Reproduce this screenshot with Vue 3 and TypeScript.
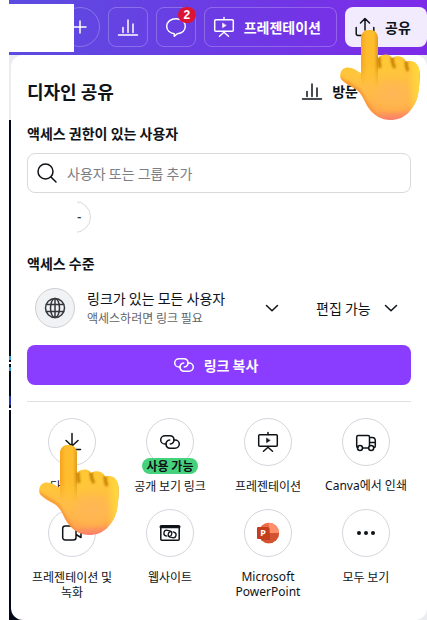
<script setup lang="ts">
import { ref } from 'vue'

interface ShareAction {
  id: string
  label: string
  badge?: string
  latin?: boolean
  pointed?: boolean
}

const actions: ShareAction[] = [
  { id: 'download', label: '다운로드', pointed: true },
  { id: 'link', label: '공개 보기 링크', badge: '사용 가능' },
  { id: 'present', label: '프레젠테이션' },
  { id: 'print', label: 'Canva에서 인쇄', latin: true },
  { id: 'record', label: '프레젠테이션 및 녹화' },
  { id: 'website', label: '웹사이트' },
  { id: 'powerpoint', label: 'Microsoft PowerPoint', latin: true },
  { id: 'more', label: '모두 보기' },
]

const people = ref('')
const permission = ref('edit')
</script>

<template>
  <div class="page">
    <!-- Shared drawings -->
    <svg class="defs" width="0" height="0" aria-hidden="true">
      <defs>
        <linearGradient id="skin" x1="0.5" y1="0" x2="0.55" y2="1">
          <stop offset="0" stop-color="#ffc52f" />
          <stop offset="0.4" stop-color="#ffc837" />
          <stop offset="0.7" stop-color="#ffba4a" />
          <stop offset="0.9" stop-color="#ffa550" />
          <stop offset="1" stop-color="#fb7f6b" />
        </linearGradient>
        <linearGradient id="finger" x1="0" y1="0" x2="1" y2="0">
          <stop offset="0" stop-color="#f7a420" />
          <stop offset="0.35" stop-color="#ffbd2e" />
          <stop offset="0.75" stop-color="#fdbd2c" />
          <stop offset="1" stop-color="#e29c1d" />
        </linearGradient>
        <linearGradient id="fingerFade" x1="0" y1="0" x2="0" y2="1">
          <stop offset="0" stop-color="#fff" />
          <stop offset="0.65" stop-color="#fff" />
          <stop offset="1" stop-color="#000" />
        </linearGradient>
        <mask id="fingerMask" maskUnits="userSpaceOnUse" x="0" y="0" width="80" height="60">
          <rect width="80" height="56" fill="url(#fingerFade)" />
        </mask>
        <linearGradient id="rightGlow" x1="0" y1="0" x2="1" y2="0">
          <stop offset="0.7" stop-color="#ffd93b" stop-opacity="0" />
          <stop offset="0.96" stop-color="#ffdb3c" stop-opacity="0.9" />
          <stop offset="1" stop-color="#e5b43a" />
        </linearGradient>
        <radialGradient id="palm">
          <stop offset="0" stop-color="#ffb657" />
          <stop offset="0.6" stop-color="#ffb94f" stop-opacity="0.7" />
          <stop offset="1" stop-color="#ffc037" stop-opacity="0" />
        </radialGradient>
        <filter id="soft" x="-50%" y="-50%" width="200%" height="200%">
          <feGaussianBlur stdDeviation="1.3" />
        </filter>
        <clipPath id="handClip">
          <path
            d="M21 9C21 3 24.500 0 29.500 0S38 3 38 9V28C40 25 43 24.500 46 24.500C49 24.500 51 26 52 28C54 26.500 57 26 60 26.500C63 27 65 29 66 31.500C70 30.500 74 31 76.500 34C79.500 37 80 42 79.500 50C79 62 78 72 70 81C64 88 57 90 50 90C42 90 34 86 28 77C24 71 23 65 17 60C12 57 4 53 1 49C-1 45 1 39 5 38C11 36 17 41 21 43Z"
          />
        </clipPath>
      </defs>
      <symbol id="hand" viewBox="0 0 80 90">
        <g clip-path="url(#handClip)">
          <rect width="80" height="90" fill="url(#skin)" />
          <ellipse cx="53" cy="64" rx="27" ry="20" fill="url(#palm)" />
          <rect x="38" y="24" width="42" height="66" fill="url(#rightGlow)" />
          <path d="M-2 47C6 53 14 56 19 61C24 68 27 79 36 86" fill="none" stroke="#f4872a" stroke-width="4" opacity="0.6" filter="url(#soft)" />
          <rect x="21" y="0" width="17" height="56" fill="url(#finger)" mask="url(#fingerMask)" />
          <g fill="none" stroke="#c47d05" stroke-width="3" filter="url(#soft)">
            <path d="M39 27C39 31 39 34 40 38" />
            <path d="M52 27C52 33 53 35 55 38" />
            <path d="M66 31C66 36 67 39 68 41" />
          </g>
        </g>
      </symbol>
      <symbol id="i-chart" viewBox="0 0 24 24">
        <path d="M2.500 20h19M7 17.500v-5M12 17.500V5M17 17.500V9" />
      </symbol>
      <symbol id="i-present" viewBox="0 0 24 24">
        <rect x="2.700" y="4.700" width="18.600" height="11.600" rx="1" />
        <path d="M12 4.500V2.500M12 16.500v1M7.500 21.300l4.500-4 4.500 4" />
        <path d="M10.500 8.300v4.400l3.500-2.200z" fill="currentColor" stroke-width="0.500" />
      </symbol>
      <symbol id="i-link" viewBox="0 0 24 24">
        <path d="M8.300 14H7A4.300 4.100 0 0 1 7 5.800H12A4.200 4.200 0 0 1 16 9.600C16.300 11.600 14.700 13.800 12.300 14" />
        <path d="M15.700 10H17A4.300 4.100 0 0 1 17 18.200H12A4.200 4.200 0 0 1 8 14.400C7.700 12.400 9.300 10.200 11.700 10" />
      </symbol>
      <symbol id="i-chevron" viewBox="0 0 24 24">
        <path d="M6.500 9.500l5.500 5.300 5.500-5.300" />
      </symbol>
    </svg>

    <header class="bar">
      <div class="cover"></div>
      <button class="tool add" type="button" aria-label="추가">
        <svg class="icon" viewBox="0 0 24 24"><path d="M6 12h12M12 6v12" /></svg>
      </button>
      <button class="tool square" type="button" aria-label="통계">
        <svg class="icon"><use href="#i-chart" /></svg>
      </button>
      <button class="tool square" type="button" aria-label="댓글">
        <svg class="icon" viewBox="0 0 24 24">
          <path d="M10.300 18.700C5.900 18.200 2.700 15.300 2.700 11.300C2.700 7 6.700 3.700 12 3.700S21.300 7 21.300 11.300C21.300 15.300 18 18.300 13.300 18.700L10.300 21.300Z" />
        </svg>
        <span class="count">2</span>
      </button>
      <button class="tool present" type="button">
        <svg class="icon"><use href="#i-present" /></svg>
        <span>프레젠테이션</span>
      </button>
      <button class="tool share" type="button">
        <svg class="icon" viewBox="0 0 24 24">
          <path d="M3.200 12.500V18.500C3.200 19.700 4 20.500 5.200 20.500H18.800C20 20.500 20.800 19.700 20.800 18.500V12.500M12 15V4M7.500 8L12 3.500L16.500 8" />
        </svg>
        <span>공유</span>
        <svg class="hand hand-share" aria-hidden="true"><use href="#hand" /></svg>
      </button>
    </header>

    <div class="backdrop">
      <main class="panel">
        <div class="title-row">
          <h1>디자인 공유</h1>
          <button class="visitors" type="button">
            <svg class="icon"><use href="#i-chart" /></svg>
            <span>방문</span>
          </button>
        </div>

        <label class="heading" for="people">액세스 권한이 있는 사용자</label>
        <div class="search">
          <svg class="icon" viewBox="0 0 24 24">
            <circle cx="10.500" cy="10.500" r="7.500" />
            <path d="M16 16l5 5" />
          </svg>
          <input id="people" v-model="people" type="text" placeholder="사용자 또는 그룹 추가" />
        </div>
        <div class="member"><span class="member-ring">-</span></div>

        <h2 class="heading">액세스 수준</h2>
        <div class="access">
          <button class="scope" type="button" aria-haspopup="listbox">
            <span class="globe">
              <svg class="icon" viewBox="0 0 24 24">
                <circle cx="12" cy="12" r="9.500" />
                <ellipse cx="12" cy="12" rx="4.500" ry="9.500" />
                <path d="M3.500 8.500h17M3.500 15.500h17M12 2.500v19" />
              </svg>
            </span>
            <span class="scope-text">
              <span class="scope-name">링크가 있는 모든 사용자</span>
              <span class="scope-note">액세스하려면 링크 필요</span>
            </span>
            <svg class="icon"><use href="#i-chevron" /></svg>
          </button>
          <div class="permission">
            <select v-model="permission" aria-label="권한">
              <option value="edit">편집 가능</option>
            </select>
            <svg class="icon"><use href="#i-chevron" /></svg>
          </div>
        </div>

        <button class="copy" type="button">
          <svg class="icon"><use href="#i-link" /></svg>
          <span>링크 복사</span>
        </button>

        <hr />

        <div class="actions">
          <button v-for="a in actions" :key="a.id" class="action" type="button">
            <span class="ring">
              <svg v-if="a.id === 'download'" class="icon" viewBox="0 0 24 24">
                <path d="M12 3.500V15.500M6 10.500l6 5.500 6-5.500M3.500 19.500h17" />
              </svg>
              <svg v-else-if="a.id === 'link'" class="icon"><use href="#i-link" /></svg>
              <svg v-else-if="a.id === 'present'" class="icon"><use href="#i-present" /></svg>
              <svg v-else-if="a.id === 'print'" class="icon" viewBox="0 0 24 24">
                <path d="M4 17.500C3 17.500 2.700 17 2.700 16V7C2.700 6 3.200 5.500 4.200 5.500H14C15 5.500 15.500 6 15.500 7V15.500M8.500 18H14.500M15.500 7.500H18.300C20.300 7.500 21.300 9 21.300 11V16C21.300 17 21 17.500 20 17.500M16 12.500H21" />
                <circle cx="6" cy="18" r="2.500" />
                <circle cx="17.200" cy="18" r="2.500" />
              </svg>
              <svg v-else-if="a.id === 'record'" class="icon" viewBox="0 0 24 24">
                <path d="M5.200 5H13.500C15 5 16 6 16 7.500V16.500C16 18 15 19 13.500 19H5.200C3.700 19 2.700 18 2.700 16.500V7.500C2.700 6 3.700 5 5.200 5ZM16 10.500L21 7.500V16.500L16 13.500" />
              </svg>
              <svg v-else-if="a.id === 'website'" class="icon" viewBox="0 0 24 24">
                <rect x="2.800" y="4.800" width="18.400" height="14.400" rx="1" />
                <path d="M3 5.700h18" stroke-width="3" />
                <g transform="rotate(12 12 13)" stroke-width="1.300">
                  <path d="M9.300 15.700H8.700A2.900 2.900 0 0 1 8.700 9.900H11.200A2.900 2.900 0 0 1 11.900 15.500" />
                  <path d="M14.700 10.300H15.300A2.900 2.900 0 0 1 15.300 16.100H12.800A2.900 2.900 0 0 1 12.100 10.500" />
                </g>
              </svg>
              <svg v-else-if="a.id === 'powerpoint'" class="brand" viewBox="0 0 24 24">
                <circle cx="12.800" cy="12" r="10.300" fill="#ed6c47" />
                <path d="M12.800 1.700A10.300 10.300 0 0 1 23.100 12H12.800Z" fill="#ff8f6b" />
                <path d="M2.500 12A10.300 10.300 0 0 0 23.100 12Z" fill="#d35230" />
                <path d="M4 7H12.800Q14 7 14 8.300V17.700Q14 19 12.800 19H5.500Z" fill="#9c2f16" opacity="0.500" />
                <rect x="1" y="6" width="12" height="12" rx="1.100" fill="#c43e1c" />
                <text x="4.200" y="15.200" class="brand-letter">P</text>
              </svg>
              <svg v-else class="icon dots" viewBox="0 0 24 24">
                <circle cx="5" cy="12" r="2" />
                <circle cx="12" cy="12" r="2" />
                <circle cx="19" cy="12" r="2" />
              </svg>
              <span v-if="a.badge" class="badge">{{ a.badge }}</span>
            </span>
            <span class="label" :class="{ latin: a.latin }">{{ a.label }}</span>
            <svg v-if="a.pointed" class="hand hand-download" aria-hidden="true"><use href="#hand" /></svg>
          </button>
        </div>
      </main>
    </div>
  </div>
</template>

<style>
body {
  background: #fff;
}
</style>

<style scoped>
.page {
  display: flex;
  flex-direction: column;
  min-height: 100vh;
  padding-left: 9px;
  box-sizing: border-box;
  overflow: hidden;
  font-family: 'Noto Sans CJK KR', 'Noto Sans', sans-serif;
  font-size: 14px;
  line-height: 20px;
  color: #0e1318;
}
.page * {
  box-sizing: border-box;
}
.defs {
  position: absolute;
}
button,
input,
select {
  margin: 0;
  padding: 0;
  border: 0;
  background: none;
  font: inherit;
  color: inherit;
}
.icon {
  display: block;
  flex: none;
  width: 24px;
  height: 24px;
  fill: none;
  stroke: currentColor;
  stroke-width: 1.5;
  stroke-linecap: round;
  stroke-linejoin: round;
}

.bar {
  display: flex;
  align-items: flex-start;
  gap: 8px;
  height: 55px;
  padding: 4px 0 3px;
  background: linear-gradient(90deg, #5b4ce0, #7d2ae8);
  color: #fff;
}
.cover {
  z-index: 1;
  flex: 1;
  align-self: stretch;
  background: #fff;
}
.tool {
  position: relative;
  display: flex;
  align-items: center;
  justify-content: center;
  gap: 8px;
  height: 40px;
  margin-top: 3px;
  border: 1px solid rgba(255, 255, 255, 0.24);
  border-radius: 8px;
  font-weight: 700;
}
.add {
  width: 40px;
  margin-left: -22px;
  border-radius: 50%;
}
.square {
  width: 40px;
}
.count {
  position: absolute;
  top: -1px;
  right: -1px;
  width: 18px;
  height: 16px;
  border-radius: 8px;
  background: #db1436;
  font: 700 12px/16px 'Liberation Sans', sans-serif;
  text-align: center;
}
.present {
  padding: 0 15px 0 7px;
}
.share {
  width: 82px;
  padding-right: 8px;
  border: 0;
  background: #f2eafd;
  color: #0e1318;
}

.backdrop {
  display: flex;
  flex: 1;
  padding-left: 2px;
  background:
    linear-gradient(
        #ebecf0 65px,
        #020817 65px 301px,
        #3a9bd0 301px 305px,
        #020817 305px 307px,
        #fff 307px 309px,
        #020817 309px 312px,
        #3a9bd0 312px 316px,
        #020817 316px 341px,
        #2336b4 341px 350px,
        #020817 350px 353px,
        #fff 353px 355px,
        #020817 355px
      )
      left top / 20px 100% no-repeat,
    #ebecf0;
}
.panel {
  flex: 1;
  min-width: 0;
  padding: 16px;
  border-radius: 12px;
  background: #fff;
}
.title-row {
  display: flex;
  align-items: center;
  justify-content: space-between;
  height: 40px;
}
h1 {
  margin: 0;
  font-size: 18px;
  line-height: 24px;
  font-weight: 700;
}
.visitors {
  display: flex;
  align-items: center;
  gap: 8px;
  padding-right: 53px;
  font-weight: 700;
}
.heading {
  display: block;
  margin: 12px 0 10px;
  font-size: 14px;
  line-height: 20px;
  font-weight: 700;
}
.search {
  display: flex;
  align-items: center;
  gap: 8px;
  height: 40px;
  padding: 0 7px;
  border: 1px solid #d9dadd;
  border-radius: 8px;
}
.search input {
  flex: 1;
  min-width: 0;
  outline: 0;
}
.search input::placeholder {
  color: #7b7e83;
  opacity: 1;
}
.member {
  display: flex;
  justify-content: flex-end;
  width: 14px;
  margin: 8px 0 20px 50px;
  overflow: hidden;
}
.member-ring {
  flex: none;
  width: 32px;
  height: 32px;
  padding-left: 17px;
  border: 1px solid #d9dadd;
  border-radius: 50%;
  color: #33373c;
  font-size: 12px;
  font-weight: 700;
  line-height: 28px;
}
h2.heading {
  margin: 0 0 15px;
}
.access {
  display: flex;
  align-items: center;
  justify-content: space-between;
  padding: 0 8px;
}
.scope {
  display: flex;
  align-items: center;
  width: 249px;
  gap: 12px;
  text-align: left;
}
.globe {
  display: flex;
  flex: none;
  align-items: center;
  justify-content: center;
  width: 40px;
  height: 40px;
  border: 1px solid #cdcfd4;
  border-radius: 50%;
  background: #f1f2f4;
  color: #33373c;
}
.scope-text {
  display: flex;
  flex: 1;
  flex-direction: column;
  white-space: nowrap;
}
.scope-note {
  font-size: 12px;
  color: #5f6368;
}
.permission {
  display: flex;
  align-items: center;
  gap: 8px;
}
.permission select {
  appearance: none;
  outline: 0;
}
.copy {
  display: flex;
  align-items: center;
  justify-content: center;
  gap: 8px;
  width: 100%;
  height: 40px;
  margin-top: 17px;
  padding-right: 8px;
  border-radius: 8px;
  background: #8b3dff;
  color: #fff;
  font-weight: 700;
}
hr {
  height: 1px;
  margin: 16px 0;
  border: 0;
  background: #dfe0e3;
}
.actions {
  display: grid;
  grid-template-columns: repeat(4, 1fr);
  row-gap: 16px;
  margin: 0 -4px;
}
.action {
  position: relative;
  display: flex;
  flex-direction: column;
  align-items: center;
  gap: 12px;
}
.ring {
  position: relative;
  display: flex;
  align-items: center;
  justify-content: center;
  width: 48px;
  height: 48px;
  border: 1px solid #d5d6dd;
  border-radius: 50%;
}
.badge {
  position: absolute;
  bottom: -9px;
  left: 50%;
  width: 56px;
  margin-left: -28px;
  height: 16px;
  border-radius: 8px;
  background: #46d27c;
  font-size: 12px;
  line-height: 16px;
  font-weight: 700;
}
.label {
  padding: 0 4px;
  font-size: 12px;
  line-height: 15px;
  word-break: keep-all;
}
.latin {
  font-family: 'Noto Sans', 'Noto Sans CJK KR', sans-serif;
}
.dots circle {
  fill: currentColor;
  stroke: none;
}
.brand {
  width: 24px;
  height: 24px;
}
.brand-letter {
  fill: #fff;
  font: 700 9px 'Noto Sans', sans-serif;
}
.hand {
  position: absolute;
  z-index: 2;
  width: 80px;
  height: 90px;
  pointer-events: none;
}
.hand-share {
  top: 23px;
  left: -5px;
}
.hand-download {
  top: 27px;
  left: 16px;
}
</style>
